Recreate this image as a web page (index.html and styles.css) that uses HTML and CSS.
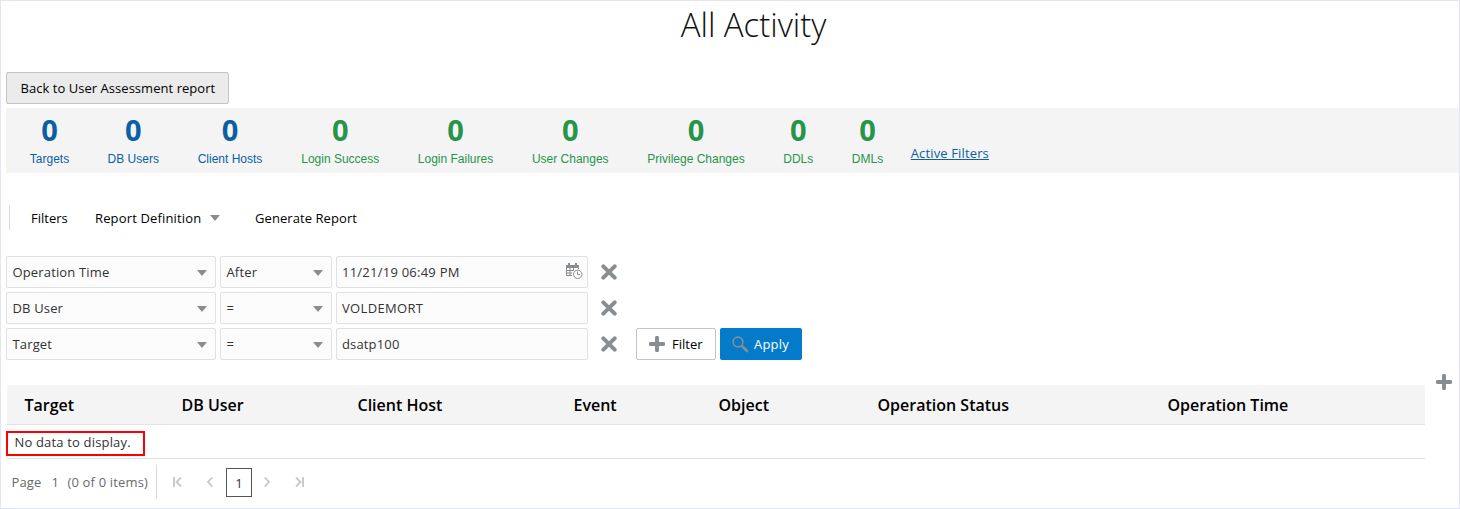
FILE: index.html
```html
<!DOCTYPE html>
<html lang="en">
<head>
<meta charset="utf-8">
<title>All Activity</title>
<link rel="stylesheet" href="styles.css">
</head>
<body>
<svg class="defs" width="0" height="0">
  <symbol id="x" viewBox="0 0 16 16"><path d="M2.3 2.3 13.7 13.7M13.7 2.3 2.3 13.7" stroke="#878d90" stroke-width="4" stroke-linecap="round"/></symbol>
  <symbol id="plus" viewBox="0 0 16 16"><path d="M8 1.7V14.3M1.7 8H14.3" stroke="#878d90" stroke-width="3.9" stroke-linecap="round"/></symbol>
  <symbol id="down" viewBox="0 0 10 6"><path d="M0 0H10L5 6Z" fill="#878d90"/></symbol>
</svg>
<main class="page">
  <h1 class="title"><span>All Activity</span></h1>
  <button class="back"><span class="t-back">Back to User Assessment report</span></button>
  <section class="stats">
    <div class="stat w1"><b>0</b><span>Targets</span></div>
    <div class="stat w2"><b>0</b><span>DB Users</span></div>
    <div class="stat w3"><b>0</b><span>Client Hosts</span></div>
    <div class="stat green w4"><b>0</b><span>Login Success</span></div>
    <div class="stat green w5"><b>0</b><span>Login Failures</span></div>
    <div class="stat green w6"><b>0</b><span>User Changes</span></div>
    <div class="stat green w7"><b>0</b><span>Privilege Changes</span></div>
    <div class="stat green w8"><b>0</b><span>DDLs</span></div>
    <div class="stat green w9"><b>0</b><span>DMLs</span></div>
    <a class="active-filters">Active Filters</a>
  </section>
  <nav class="toolbar">
    <span class="tool filters">Filters</span>
    <span class="tool definition">Report Definition</span>
    <svg class="arrow" width="10" height="6"><use href="#down"/></svg>
    <span class="tool generate">Generate Report</span>
  </nav>
  <section class="rules">
    <div class="rule">
      <div class="field attr"><span>Operation Time</span><svg class="arrow" width="10" height="6"><use href="#down"/></svg></div>
      <div class="field op"><span>After</span><svg class="arrow" width="10" height="6"><use href="#down"/></svg></div>
      <div class="field value"><span class="date">11/21/19 06:49 PM</span>
        <svg class="calendar" width="17" height="17" viewBox="0 0 17 17" fill="none" stroke="#878d90">
          <path d="M0 2H13V5H0Z" fill="#878d90" stroke="none"/>
          <path d="M3 0V3M10 0V3" stroke-width="2"/>
          <path d="M.5 4V12.5H6M4 5V12M7.5 5V8M0 7.5H8M0 10H6M12.5 4V6"/>
          <circle cx="11.7" cy="11.3" r="4.2"/>
          <path d="M11.5 8.5V11.5H14"/>
        </svg>
      </div>
      <svg class="remove" width="16" height="16"><use href="#x"/></svg>
    </div>
    <div class="rule">
      <div class="field attr"><span>DB User</span><svg class="arrow" width="10" height="6"><use href="#down"/></svg></div>
      <div class="field op"><span>=</span><svg class="arrow" width="10" height="6"><use href="#down"/></svg></div>
      <div class="field value"><span class="name">VOLDEMORT</span></div>
      <svg class="remove" width="16" height="16"><use href="#x"/></svg>
    </div>
    <div class="rule">
      <div class="field attr"><span>Target</span><svg class="arrow" width="10" height="6"><use href="#down"/></svg></div>
      <div class="field op"><span>=</span><svg class="arrow" width="10" height="6"><use href="#down"/></svg></div>
      <div class="field value"><span>dsatp100</span></div>
      <svg class="remove" width="16" height="16"><use href="#x"/></svg>
      <button class="add"><svg width="16" height="16"><use href="#plus"/></svg><span>Filter</span></button>
      <button class="apply"><svg width="17" height="17" viewBox="0 0 17 17" fill="none" stroke="#878d90"><circle cx="6" cy="6" r="4.9" stroke-width="1.6"/><path d="M9.5 9.5 11 11" stroke-width="1.6"/><path d="M11 11 15 15" stroke-width="2.8" stroke-linecap="round"/></svg><span>Apply</span></button>
    </div>
  </section>
  <section class="results">
    <div class="table">
      <div class="head">
        <span>Target</span><span>DB User</span><span>Client Host</span><span>Event</span><span>Object</span><span>Operation Status</span><span>Operation Time</span>
      </div>
      <div class="empty"><div class="notice"><span>No data to display.</span></div></div>
    </div>
    <svg class="add-column" width="16" height="16"><use href="#plus"/></svg>
  </section>
  <footer class="pager">
    <div class="summary"><span class="p-page">Page</span><span class="p-num">1</span><span class="p-items">(0 of 0 items)</span></div>
    <svg class="first" width="9" height="10" viewBox="0 0 9 10"><path d="M1 0V10M8 .5 3.5 5 8 9.5"/></svg>
    <svg class="prev" width="6" height="10" viewBox="0 0 6 10"><path d="M5.3 .5 1 5 5.3 9.5"/></svg>
    <span class="current">1</span>
    <svg class="next" width="6" height="10" viewBox="0 0 6 10"><path d="M.7 .5 5 5 .7 9.5"/></svg>
    <svg class="last" width="9" height="10" viewBox="0 0 9 10"><path d="M8 0V10M1 .5 5.5 5 1 9.5"/></svg>
  </footer>
</main>
</body>
</html>
```
FILE: styles.css
```css
* { box-sizing: border-box; }
body { margin: 0; background: #fff; font: 13px/18px "Open Sans", "Noto Sans", sans-serif; color: #333; }
svg { display: block; flex: none; }
span { white-space: nowrap; }
button { font: inherit; padding: 0; display: flex; align-items: center; }
.defs { position: absolute; }
.page { width: 1460px; height: 509px; border: 1px solid #e3e3fa; padding-left: 5px; overflow: hidden; }
.title { margin: 0; height: 71px; padding: 2px 0 0 42px; text-align: center; font-size: 33px; line-height: 44px; font-weight: 300; color: #111; letter-spacing: -0.05px; }
.back { width: 223px; height: 32px; padding-left: 13.5px; background: #ebebeb; border: 1px solid #c4c4c4; border-radius: 2px; color: #000; letter-spacing: 0.04px; }
.stats { margin-top: 4px; height: 65px; background: #f4f4f4; display: flex; gap: 38.75px; padding-left: 24px; }
.stat { display: flex; flex-direction: column; align-items: center; color: #0a5fa5; font: 12px/14px "Liberation Sans", Arial, sans-serif; }
.stat b { font: 700 29px/44px "Open Sans", sans-serif; }
.green { color: #27944a; }
.w1 { width: 39px; } .w2 { width: 51px; } .w3 { width: 65px; }
.w4 { width: 78px; } .w5 { width: 75px; } .w6 { width: 77px; }
.w7 { width: 97px; } .w8 { width: 30px; } .w9 { width: 31px; }
.active-filters { margin: 36px 0 0 -11px; color: #0a5fa5; text-decoration: underline; white-space: nowrap; letter-spacing: 0.14px; }
.toolbar { margin: 32px 0 0 3px; height: 25px; border-left: 1px solid #d6d9db; padding-left: 21px; display: flex; align-items: center; color: #000; }
.filters { width: 64px; }
.definition { width: 115px; letter-spacing: 0.15px; }
.generate { margin-left: 35px; letter-spacing: 0.07px; }
.rules { margin-top: 26px; display: flex; flex-direction: column; gap: 4px; }
.rule { display: flex; align-items: center; gap: 4px; height: 32px; }
.field { height: 32px; background: #fcfcfc; border: 1px solid #dfe1e2; border-radius: 2px; padding: 0 8px 0 5.5px; display: flex; align-items: center; justify-content: space-between; letter-spacing: 0.15px; }
.field .arrow { margin-top: 1px; }
.date { letter-spacing: 0.24px; }
.name { letter-spacing: 0.33px; }
.attr { width: 210px; }
.op { width: 112px; }
.value { width: 252px; padding-right: 4px; padding-left: 5px; }
.calendar { margin-top: -1px; }
.remove { margin-left: 9px; }
.add { width: 80px; height: 32px; margin-left: 15px; padding-left: 12px; gap: 7px; background: #fff; border: 1px solid #c4c4c4; border-radius: 2px; color: #000; }
.apply { width: 82px; height: 32px; padding-left: 12px; gap: 5px; background: #047bc8; border: 0; border-radius: 2px; color: #fff; letter-spacing: 0.2px; }
.results { display: flex; margin: 13px 0 0 1px; }
.table { width: 1418px; padding-top: 12px; }
.head { height: 40px; background: #f4f4f4; border-bottom: 1px solid #e3e3e3; padding-left: 17.5px; display: grid; grid-template-columns: 157px 176px 216px 145px 159px 290px 1fr; align-items: center; font-size: 16px; font-weight: 600; color: #000; }
.empty { height: 34px; padding-top: 6px; border-bottom: 1px solid #dedede; }
.notice { width: 139px; height: 25px; margin-left: -1px; border: 2px solid #ff0000; padding: 0 0 0 6.5px; letter-spacing: 0.17px; }
.add-column { margin: 1px 0 0 11px; }
.pager { display: flex; align-items: center; height: 47px; color: #6b6b6b; }
.pager svg { fill: none; stroke: #c4c6c8; stroke-width: 1.8; margin-top: -2px; }
.summary { width: 151px; height: 34px; margin-top: -2px; border-right: 1px solid #d6d9db; display: flex; align-items: center; padding-left: 5.5px; letter-spacing: 0.16px; }
.p-page { width: 40px; } .p-num { width: 16px; }
.pager .first { margin-left: 16px; }
.pager .prev { margin-left: 25px; }
.current { width: 26px; height: 29px; margin-left: 13px; border: 1px solid #555; text-align: center; line-height: 28px; color: #333; }
.pager .next { margin-left: 12px; }
.pager .last { margin-left: 25px; }
```
